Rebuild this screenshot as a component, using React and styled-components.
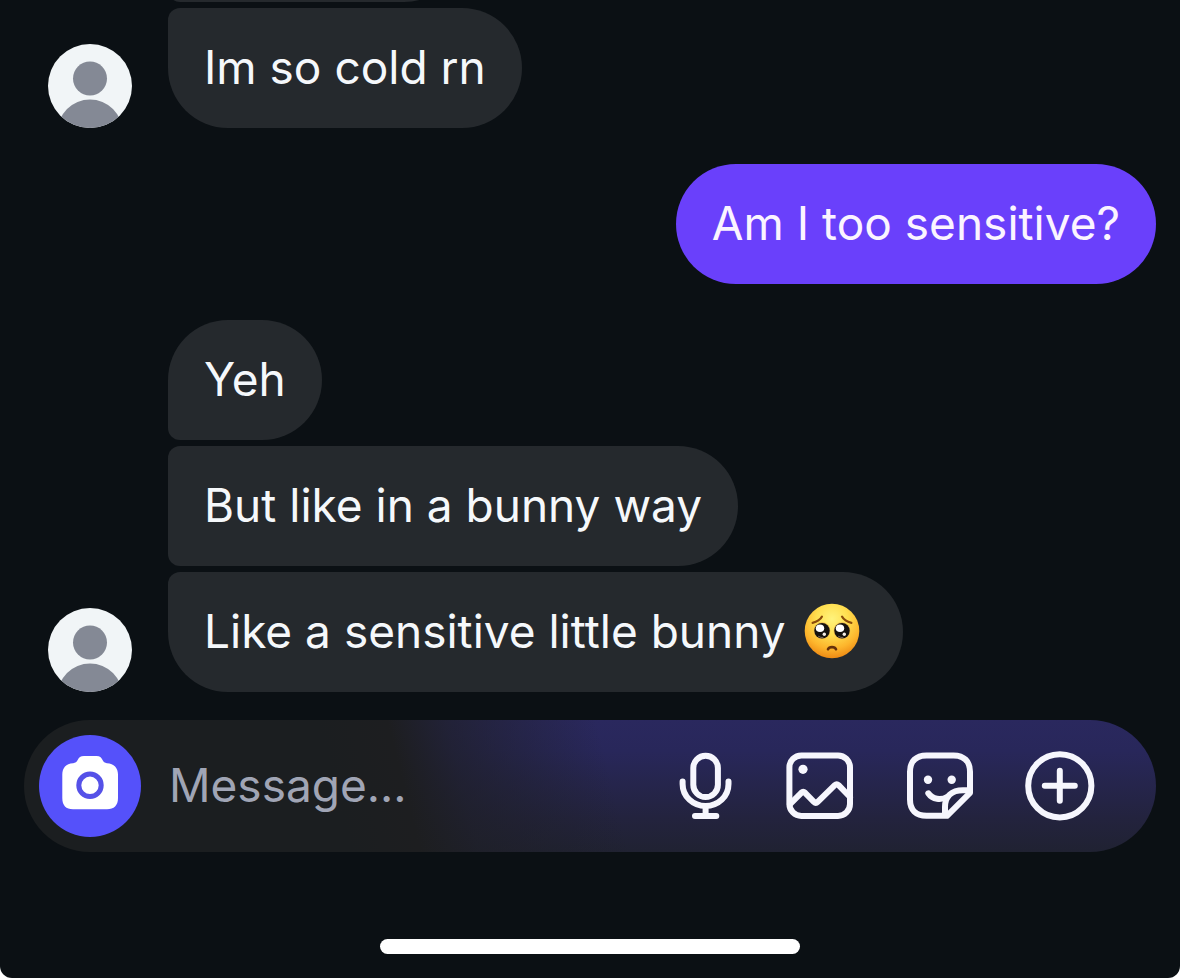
import React from 'react';
import styled, { createGlobalStyle } from 'styled-components';

const GlobalStyle = createGlobalStyle`
  *, *::before, *::after { box-sizing: border-box; }
  body {
    margin: 0;
    background: #ffffff;
    font-family: Inter, 'Liberation Sans', sans-serif;
  }
`;

const Screen = styled.main`
  display: flex;
  flex-direction: column;
  height: 100vh;
  overflow: hidden;
  background: #0b1014;
  border-radius: 0 0 12px 12px;
`;

const Thread = styled.section`
  flex: 1;
  min-height: 0;
  display: flex;
  flex-direction: column;
  justify-content: flex-end;
  gap: 36px;
  padding: 0 24px 28px;
  overflow: hidden;
`;

const Received = styled.div`
  display: flex;
  align-items: flex-end;
  gap: 36px;
  padding-left: 24px;
`;

const Sent = styled.div`
  display: flex;
  justify-content: flex-end;
`;

const Stack = styled.div`
  display: flex;
  flex-direction: column;
  align-items: flex-start;
  gap: 6px;
`;

const radii = {
  first: '60px 60px 60px 12px',
  middle: '12px 60px 60px 12px',
  last: '12px 60px 60px 60px',
  single: '60px',
};

const Bubble = styled.p`
  display: flex;
  align-items: center;
  gap: 18px;
  margin: 0;
  min-height: 120px;
  padding: 31px 36px 33px;
  border-radius: ${({ $place }) => radii[$place]};
  background: ${({ $mine }) => ($mine ? '#6a40fb' : '#25292d')};
  color: ${({ $mine }) => ($mine ? '#fbf4ff' : '#f5f8fb')};
  font-size: 46px;
  line-height: 56px;
`;

const ScrolledBubble = styled(Bubble)`
  width: 296px;
`;

const AvatarDrawing = styled.svg`
  flex: none;
  width: 84px;
  height: 84px;
  border-radius: 50%;
`;

const EmojiDrawing = styled.svg`
  flex: none;
  width: 56px;
  height: 56px;
  margin-right: 7px;
`;

const Composer = styled.form`
  flex: none;
  display: flex;
  align-items: center;
  height: 132px;
  margin: 0 24px;
  padding: 0 60px 0 15px;
  border-radius: 66px;
  background:
    linear-gradient(76deg, #1b1e20 0%, #1b1e20 28%, #1d1e20 34%, rgba(30, 31, 38, 0.7) 39%, rgba(32, 32, 46, 0) 52%),
    linear-gradient(to bottom, #2a285e 0%, #28275a 24%, #23233e 74%, #202232 100%);
`;

const CameraButton = styled.button`
  flex: none;
  display: grid;
  place-items: center;
  width: 102px;
  height: 102px;
  padding: 0;
  border: 0;
  border-radius: 50%;
  background: #5551fa;
`;

const MessageInput = styled.input`
  flex: 1;
  min-width: 0;
  height: 72px;
  margin-left: 28px;
  padding: 0 0 3px;
  border: 0;
  outline: 0;
  background: transparent;
  color: #f5f8fb;
  font-family: inherit;
  font-size: 46px;
  &::placeholder { color: #a0a5b5; opacity: 1; }
`;

const Tools = styled.div`
  flex: none;
  display: flex;
  gap: 48px;
`;

const ToolButton = styled.button`
  display: block;
  width: ${({ $narrow }) => ($narrow ? '60px' : '72px')};
  height: 72px;
  padding: 0;
  border: 0;
  background: transparent;
  color: #f6f6fd;
`;

const Icon = styled.svg`
  display: block;
  height: 72px;
  fill: none;
  stroke: currentColor;
  stroke-width: 6;
  stroke-linecap: round;
  stroke-linejoin: round;
`;

const HomeIndicator = styled.div`
  flex: none;
  align-self: center;
  width: 420px;
  max-width: 60%;
  height: 15px;
  margin: 87px 0 24px;
  border-radius: 8px;
  background: #ffffff;
`;

function Avatar() {
  return (
    <AvatarDrawing viewBox="0 0 84 84" role="img" aria-label="Profile picture">
      <rect width="84" height="84" fill="#f1f5f7" />
      <circle cx="42" cy="34.5" r="17" fill="#848995" />
      <circle cx="42" cy="88" r="32.5" fill="#848995" />
    </AvatarDrawing>
  );
}

function PleadingFace() {
  return (
    <EmojiDrawing viewBox="0 0 56 56" role="img" aria-label="Pleading face">
      <defs>
        <radialGradient id="face" cx="0.5" cy="0.28" r="0.72">
          <stop offset="0" stopColor="#fff37c" />
          <stop offset="0.4" stopColor="#ffdf50" />
          <stop offset="0.75" stopColor="#fdb52c" />
          <stop offset="1" stopColor="#ee8a14" />
        </radialGradient>
      </defs>
      <circle cx="28" cy="28" r="27.3" fill="url(#face)" />
      <path d="M8.6 19.8C12.6 19 16.2 17 18 13.6M47.4 19.8C43.4 19 39.8 17 38 13.6" fill="none" stroke="#8b4b0b" strokeWidth="2.2" strokeLinecap="round" />
      <circle cx="18" cy="27.7" r="8.4" fill="#e9b64a" />
      <circle cx="38" cy="27.7" r="8.4" fill="#e9b64a" />
      <circle cx="18" cy="27.7" r="7.7" fill="#15120f" />
      <circle cx="38" cy="27.7" r="7.7" fill="#15120f" />
      <ellipse cx="16" cy="25.3" rx="4.2" ry="3.8" fill="#ffffff" />
      <ellipse cx="36" cy="25.3" rx="4.2" ry="3.8" fill="#ffffff" />
      <circle cx="20.3" cy="31.3" r="1.7" fill="#f2ece6" />
      <circle cx="40.3" cy="31.3" r="1.7" fill="#f2ece6" />
      <path d="M14.2 33.2Q17 35 19.4 34.4M34.2 33.2Q37 35 39.4 34.4" fill="none" stroke="#7d6a62" strokeWidth="1" />
      <path d="M24 46.2C25.2 43.4 30.8 43.4 32 46.2" fill="none" stroke="#65300a" strokeWidth="2.6" strokeLinecap="round" />
    </EmojiDrawing>
  );
}

function CameraIcon() {
  return (
    <svg width="72" height="72" viewBox="0 0 72 72" aria-hidden="true">
      <path
        fill="#ffffff"
        d="M30 6H42.5C46 6 47.3 7.6 48.4 9.8C49.6 12.2 50.6 13 53 13.2C60 13.6 64 18 64 24.5V48C64 55.5 60 59.3 53 59.3H19C12 59.3 8.3 55.5 8.3 48V24.5C8.3 18 12 13.6 19 13.2C21.6 13 22.6 12.2 23.8 9.8C24.9 7.6 26.4 6 30 6Z"
      />
      <circle cx="36" cy="35.3" r="11.2" fill="#ffffff" stroke="#5551e8" strokeWidth="5" />
    </svg>
  );
}

function MicIcon() {
  return (
    <Icon viewBox="0 0 60 72" aria-hidden="true">
      <rect x="17.3" y="5.7" width="24.6" height="41.4" rx="12.3" />
      <path d="M6.6 31.5V34C6.6 46.5 17 56 29.6 56S52.5 46.5 52.5 34V31.5M29.6 56V65M19 66H40.3" />
    </Icon>
  );
}

function ImageIcon() {
  return (
    <Icon viewBox="0 0 72 72" aria-hidden="true">
      <rect x="5.4" y="5.4" width="60.6" height="60.6" rx="12" />
      <circle cx="19" cy="19.3" r="4.6" fill="currentColor" stroke="none" />
      <path d="M6 54.2L17.3 42.8Q19.2 41 21.1 42.8L29.9 51.9Q31.8 53.8 33.7 51.9L50.8 35.2Q52.7 33.4 54.6 35.2L66 47" />
    </Icon>
  );
}

function StickerIcon() {
  return (
    <Icon viewBox="0 0 72 72" aria-hidden="true">
      <path d="M41.5 65.8H22.5C12 65.8 6 59.8 6 49.5V21.7C6 11.4 12 5.4 22.5 5.4H49.5C60 5.4 66 11.4 66 21.7V42.8L43 65.8Z" />
      <path d="M65.5 40.2H59C47.5 40.2 41 46.5 41 57V65" />
      <path d="M24.3 43.3C28.5 49.5 37 50.6 43.5 46.7" />
      <circle cx="24" cy="29.7" r="4.2" fill="currentColor" stroke="none" />
      <circle cx="47.7" cy="29.7" r="4.2" fill="currentColor" stroke="none" />
    </Icon>
  );
}

function PlusIcon() {
  return (
    <Icon viewBox="0 0 72 72" aria-hidden="true">
      <circle cx="35.8" cy="35.8" r="31.6" />
      <path d="M20.8 35.8H50.8M35.8 20.8V50.8" />
    </Icon>
  );
}

export default function App() {
  return (
    <>
      <GlobalStyle />
      <Screen>
        <Thread aria-label="Conversation">
          <Received>
            <Avatar />
            <Stack>
              <ScrolledBubble $place="middle" />
              <Bubble $place="last">Im so cold rn</Bubble>
            </Stack>
          </Received>
          <Sent>
            <Bubble $mine $place="single">Am I too sensitive?</Bubble>
          </Sent>
          <Received>
            <Avatar />
            <Stack>
              <Bubble $place="first">Yeh</Bubble>
              <Bubble $place="middle">But like in a bunny way</Bubble>
              <Bubble $place="last">
                Like a sensitive little bunny <PleadingFace />
              </Bubble>
            </Stack>
          </Received>
        </Thread>
        <Composer onSubmit={(event) => event.preventDefault()}>
          <CameraButton type="button" aria-label="Open camera">
            <CameraIcon />
          </CameraButton>
          <MessageInput type="text" placeholder="Message..." aria-label="Message" />
          <Tools>
            <ToolButton $narrow type="button" aria-label="Record voice message"><MicIcon /></ToolButton>
            <ToolButton type="button" aria-label="Send a photo"><ImageIcon /></ToolButton>
            <ToolButton type="button" aria-label="Send a sticker"><StickerIcon /></ToolButton>
            <ToolButton type="button" aria-label="More options"><PlusIcon /></ToolButton>
          </Tools>
        </Composer>
        <HomeIndicator />
      </Screen>
    </>
  );
}
